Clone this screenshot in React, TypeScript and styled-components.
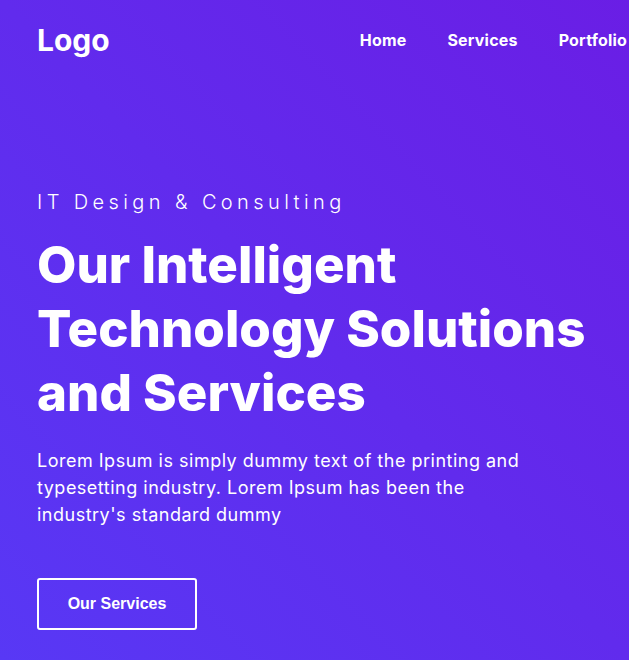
import React from "react";
import styled, { createGlobalStyle } from "styled-components";

const Global = createGlobalStyle`
  html, body { margin: 0; padding: 0; }
  body { font-family: "Inter", "Open Sans", sans-serif; overflow: hidden; }
  * { box-sizing: border-box; }
`;

const Page = styled.div`
  width: 629px;
  height: 660px;
  overflow: hidden;
  background: linear-gradient(to top right, #5838f5 0%, #6a1ee5 100%);
  color: #fff;
  padding: 0 0 0 37px;
`;

const Header = styled.header`
  display: flex;
  align-items: center;
  justify-content: space-between;
  height: 80px;
  white-space: nowrap;
`;

const Logo = styled.div`
  font-family: "Inter", sans-serif;
  font-weight: 700;
  font-size: 30px;
  letter-spacing: 0;
`;

const Nav = styled.nav`
  display: flex;
  margin-right: 2px;
`;

const NavLink = styled.a`
  font-family: "Inter", sans-serif;
  font-weight: 700;
  font-size: 16px;
  letter-spacing: 0.2px;
  color: #fff;
  text-decoration: none;
  margin-left: 41px;
`;

const Hero = styled.section`
  display: flex;
  flex-direction: column;
  align-items: flex-start;
  padding-top: 107px;
`;

const Kicker = styled.div`
  font-family: "Inter", sans-serif;
  font-weight: 300;
  font-size: 20px;
  letter-spacing: 4.4px;
  line-height: 30px;
`;

const Title = styled.h1`
  margin: 16px 0 0;
  font-family: "Inter", sans-serif;
  font-weight: 800;
  font-size: 51px;
  line-height: 64px;
  letter-spacing: 0;
  white-space: nowrap;
`;

const Lead = styled.p`
  margin: 22px 0 0;
  font-family: "Inter", sans-serif;
  font-weight: 400;
  font-size: 18px;
  line-height: 27px;
  letter-spacing: 0.5px;
  max-width: 500px;
`;

const Button = styled.a`
  display: inline-flex;
  align-items: center;
  justify-content: center;
  margin-top: 50px;
  width: 160px;
  height: 52px;
  border: 2px solid #fff;
  border-radius: 3px;
  font-family: "Liberation Sans", Arial, sans-serif;
  font-weight: 700;
  font-size: 16px;
  color: #fff;
  text-decoration: none;
`;

export default function App() {
  return (
    <>
      <Global />
      <Page>
        <Header>
          <Logo>Logo</Logo>
          <Nav>
            <NavLink href="#">Home</NavLink>
            <NavLink href="#">Services</NavLink>
            <NavLink href="#">Portfolio</NavLink>
          </Nav>
        </Header>
        <Hero>
          <Kicker>IT Design &amp; Consulting</Kicker>
          <Title>
            Our Intelligent
            <br />
            Technology Solutions
            <br />
            and Services
          </Title>
          <Lead>
            Lorem Ipsum is simply dummy text of the printing and typesetting
            industry. Lorem Ipsum has been the industry's standard dummy
          </Lead>
          <Button href="#">Our Services</Button>
        </Hero>
      </Page>
    </>
  );
}
